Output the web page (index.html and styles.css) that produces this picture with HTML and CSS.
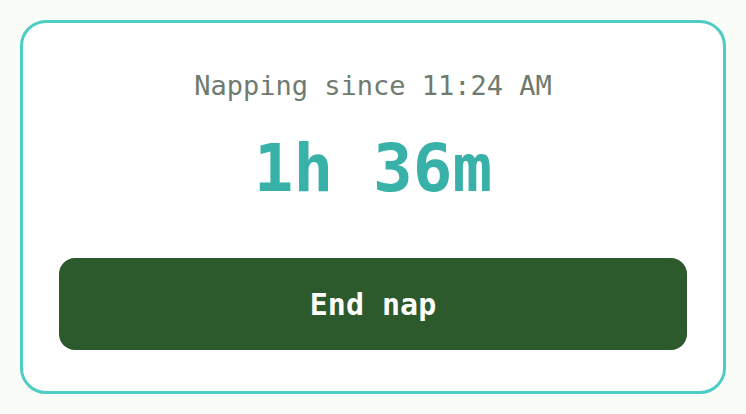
FILE: index.html
```html
<!DOCTYPE html>
<html>
<head>
<meta charset="utf-8">
<link rel="stylesheet" href="styles.css">
</head>
<body>
<div class="card">
  <div class="since">Napping since 11:24 AM</div>
  <div class="elapsed">1h 36m</div>
  <button class="end">End nap</button>
</div>
</body>
</html>
```
FILE: styles.css
```css
html, body {
  margin: 0;
  padding: 0;
  background: #fafcf7;
}
body {
  width: 746px;
  height: 414px;
  box-sizing: border-box;
  padding: 20px;
  font-family: "DejaVu Sans Mono", "Liberation Mono", monospace;
}
.card {
  box-sizing: border-box;
  height: 374px;
  background: #ffffff;
  border: 3px solid #4ecdc4;
  border-radius: 26px;
  padding: 46px 36px 41px;
  display: flex;
  flex-direction: column;
  align-items: center;
}
.since {
  font-size: 27px;
  line-height: 34px;
  color: #6e7b6e;
}
.elapsed {
  margin-top: 26px;
  font-size: 66px;
  line-height: 80px;
  font-weight: bold;
  color: #38b2a8;
}
.end {
  margin-top: auto;
  width: 100%;
  height: 92px;
  border: none;
  border-radius: 16px;
  background: #2d5a2d;
  color: #ffffff;
  font-family: inherit;
  font-size: 30px;
  font-weight: bold;
}
```
